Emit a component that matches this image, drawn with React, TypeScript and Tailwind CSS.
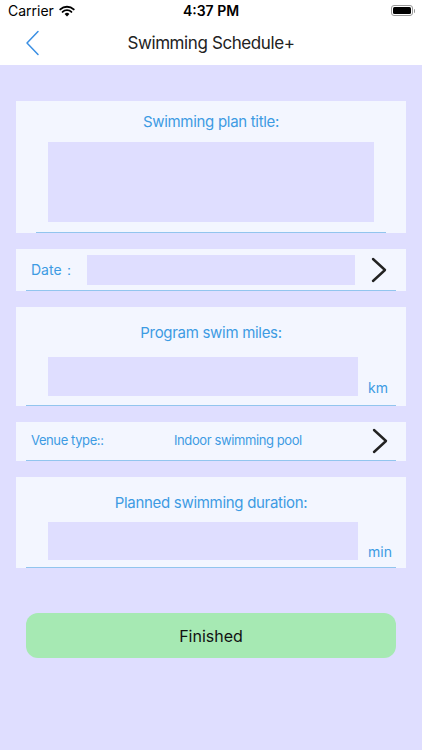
import React from "react";

const Chevron = () => (
  <svg width="16" height="26" viewBox="0 0 16 26" fill="none">
    <path d="M2 2 L14 13 L2 24" stroke="#222" strokeWidth="2.4" strokeLinecap="round" strokeLinejoin="round" />
  </svg>
);

export default function App() {
  return (
    <div className="w-[422px] h-[750px] flex flex-col bg-[#dfdeff] overflow-hidden" style={{ fontFamily: "Inter, 'Noto Sans', sans-serif" }}>
      {/* status bar */}
      <div className="h-[22px] bg-white relative flex items-center px-[8px]">
        <span className="text-[14px] text-black leading-none">Carrier</span>
        <svg className="ml-[5px]" width="16" height="12" viewBox="0 0 16 12">
          <path d="M8 11.5 L5.6 8.9 A3.6 3.6 0 0 1 10.4 8.9 Z" fill="#000" />
          <path d="M3.6 6.9 A6.4 6.4 0 0 1 12.4 6.9" stroke="#000" strokeWidth="1.9" fill="none" strokeLinecap="round" />
          <path d="M1.3 4.4 A9.6 9.6 0 0 1 14.7 4.4" stroke="#000" strokeWidth="1.9" fill="none" strokeLinecap="round" />
        </svg>
        <span className="absolute left-1/2 -translate-x-1/2 text-[14px] font-semibold text-black leading-none">4:37 PM</span>
        <div className="absolute right-[7px] top-[5px] flex items-center">
          <div className="w-[22px] h-[11px] rounded-[3px] border border-[#999] p-[1px]">
            <div className="w-full h-full bg-black rounded-[1.5px]" />
          </div>
          <div className="w-[1.5px] h-[4px] bg-[#999] ml-[1px] rounded-r" />
        </div>
      </div>
      {/* nav bar */}
      <div className="h-[43px] bg-white relative flex items-center justify-center">
        <svg className="absolute left-[25px] top-[8px]" width="15" height="26" viewBox="0 0 15 26" fill="none">
          <path d="M13 1.5 L2 13 L13 24.5" stroke="#3a8fe3" strokeWidth="1.5" strokeLinecap="round" strokeLinejoin="round" />
        </svg>
        <span className="text-[17px] text-[#222] leading-none tracking-[-0.4px]">Swimming Schedule+</span>
      </div>

      <div className="flex flex-col px-[16px] pt-[36px]">
        {/* card 1 */}
        <div className="bg-[#f3f6ff] h-[132px] flex flex-col items-center">
          <div className="mt-[11px] text-[15px] text-[#3d9be3] leading-[20px] tracking-[-0.3px]">Swimming plan title:</div>
          <div className="mt-[10px] w-[326px] h-[80px] bg-[#dfdeff]" />
          <div className="mt-auto w-[350px] h-px bg-[#92c5ee]" />
        </div>

        {/* date */}
        <div className="mt-[16px] bg-[#f3f6ff] h-[42px] flex flex-col">
          <div className="flex-1 flex items-center">
            <span className="ml-[15px] w-[56px] text-[14px] text-[#3d9be3]">Date：</span>
            <div className="w-[268px] h-[30px] bg-[#dfdeff]" />
            <div className="ml-[16px]"><Chevron /></div>
          </div>
          <div className="ml-[10px] w-[370px] h-px bg-[#92c5ee]" />
        </div>

        {/* miles */}
        <div className="mt-[16px] bg-[#f3f6ff] h-[99px] flex flex-col">
          <div className="mt-[16px] text-center text-[15px] text-[#3d9be3] leading-[20px] tracking-[-0.3px]">Program swim miles:</div>
          <div className="mt-[14px] flex items-end">
            <div className="ml-[32px] w-[310px] h-[39px] bg-[#dfdeff]" />
            <span className="ml-[10px] text-[14px] text-[#3d9be3] leading-[18px] -mb-[1px]">km</span>
          </div>
          <div className="mt-auto ml-[10px] w-[370px] h-px bg-[#92c5ee]" />
        </div>

        {/* venue */}
        <div className="mt-[16px] bg-[#f3f6ff] h-[39px] flex flex-col">
          <div className="flex-1 flex items-center">
            <span className="ml-[15px] w-[143px] text-[13px] text-[#3d9be3] tracking-[-0.4px]">Venue type::</span>
            <span className="w-[198px] text-[13px] text-[#3d9be3] tracking-[-0.4px]">Indoor swimming pool</span>
            <Chevron />
          </div>
          <div className="ml-[10px] w-[370px] h-px bg-[#92c5ee]" />
        </div>

        {/* duration */}
        <div className="mt-[16px] bg-[#f3f6ff] h-[91px] flex flex-col">
          <div className="mt-[16px] text-center text-[15px] text-[#3d9be3] leading-[20px] tracking-[-0.3px]">Planned swimming duration:</div>
          <div className="mt-[9px] flex items-end">
            <div className="ml-[32px] w-[310px] h-[38px] bg-[#dfdeff]" />
            <span className="ml-[10px] text-[14px] text-[#3d9be3] leading-[18px] -mb-[1px]">min</span>
          </div>
          <div className="mt-auto ml-[10px] w-[370px] h-px bg-[#92c5ee]" />
        </div>

        {/* button */}
        <div className="mt-[45px] mx-[10px] h-[45px] rounded-[12px] bg-[#a6e9b3] flex items-center justify-center">
          <span className="text-[16px] text-[#111]">Finished</span>
        </div>
      </div>
    </div>
  );
}
